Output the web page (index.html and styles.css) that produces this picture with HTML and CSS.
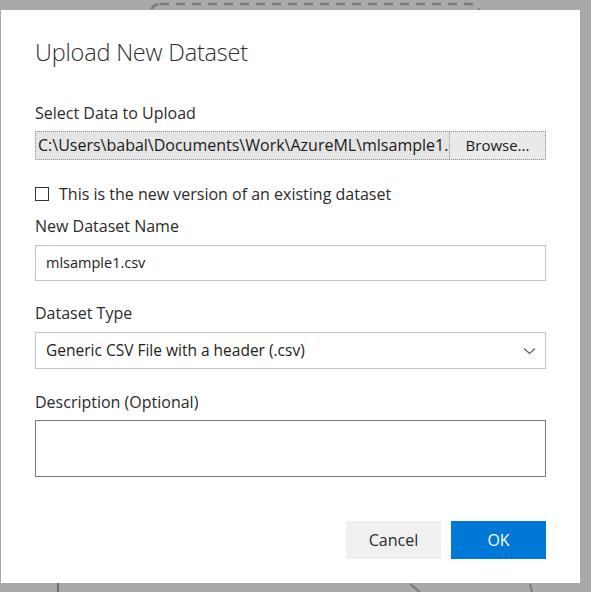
FILE: index.html
```html
<!DOCTYPE html>
<html lang="en">
<head>
<meta charset="utf-8">
<title>Upload New Dataset</title>
<link rel="stylesheet" href="styles.css">
</head>
<body>
<div class="backdrop">
  <svg class="canvas-art" width="591" height="592" viewBox="0 0 591 592" aria-hidden="true">
    <rect x="150" y="4" width="330" height="60" rx="10" ry="10" fill="none" stroke="#7b7b7b" stroke-width="2.5" stroke-dasharray="9 7"/>
    <line x1="58" y1="583" x2="58" y2="592" stroke="#6e6e6e" stroke-width="2"/>
    <line x1="410" y1="584" x2="420" y2="592" stroke="#7a7a7a" stroke-width="2"/>
    <line x1="530" y1="584" x2="532" y2="592" stroke="#7a7a7a" stroke-width="2"/>
  </svg>
  <div class="dialog">
    <h1 class="title">Upload New Dataset</h1>

    <div class="label first">Select Data to Upload</div>
    <div class="file">
      <span class="file-path">C:\Users\babal\Documents\Work\AzureML\mlsample1.csv</span>
      <span class="file-browse">Browse...</span>
    </div>

    <div class="check">
      <span class="check-box"></span>
      <span class="check-text">This is the new version of an existing dataset</span>
    </div>

    <div class="label l-name">New Dataset Name</div>
    <div class="input">mlsample1.csv</div>

    <div class="label l-type">Dataset Type</div>
    <div class="select">
      <span>Generic CSV File with a header (.csv)</span>
      <svg class="chevron" width="13" height="8" viewBox="0 0 13 8" aria-hidden="true">
        <polyline points="1,1.5 6.5,6.5 12,1.5" fill="none" stroke="#5a5a5a" stroke-width="1.1"/>
      </svg>
    </div>

    <div class="label l-desc">Description (Optional)</div>
    <div class="textarea"></div>

    <div class="actions">
      <button class="btn btn-cancel" type="button">Cancel</button>
      <button class="btn btn-ok" type="button">OK</button>
    </div>
  </div>
</div>
</body>
</html>
```

FILE: styles.css
```css
* { box-sizing: border-box; }

html, body {
  margin: 0;
  padding: 0;
  background: #a9a9a9;
}

body {
  font-family: "Open Sans", "Noto Sans", "Liberation Sans", sans-serif;
  color: #2b2b2b;
}

.backdrop {
  position: relative;
  width: 591px;
  height: 592px;
  overflow: hidden;
  padding: 10px 0 0 1px;
}

.canvas-art {
  position: absolute;
  left: 0;
  top: 0;
}

.dialog {
  position: relative;
  width: 579px;
  height: 573px;
  background: #ffffff;
  padding: 27px 0 0 34px;
  display: flex;
  flex-direction: column;
  align-items: flex-start;
}

.title {
  margin: 0;
  font-size: 23.5px;
  font-weight: 300;
  line-height: 30px;
  color: #2e2e2e;
  letter-spacing: -0.2px;
}

.label {
  font-size: 16px;
  line-height: 20px;
  color: #2b2b2b;
}

.label.first { margin-top: 36px; }

.file {
  margin-top: 8px;
  width: 511px;
  height: 29px;
  display: flex;
  background: #e5e5e5;
  border: 1px dotted #8f8f8f;
}

.file-path {
  flex: 1;
  overflow: hidden;
  white-space: nowrap;
  font-size: 16px;
  line-height: 27px;
  padding-left: 2px;
  color: #1a1a1a;
}

.file-browse {
  width: 96px;
  flex: none;
  border-left: 1px dotted #8f8f8f;
  background: #e9e9e9;
  font-size: 15px;
  line-height: 27px;
  text-align: center;
  color: #1a1a1a;
}

.check {
  margin-top: 24px;
  display: flex;
  align-items: center;
  height: 20px;
}

.check-box {
  width: 14px;
  height: 14px;
  border: 1px solid #333;
  margin-right: 10px;
  flex: none;
}

.check-text {
  font-size: 16px;
  line-height: 20px;
}

.label.l-name { margin-top: 12px; }

.input {
  margin-top: 9px;
  width: 511px;
  height: 36px;
  border: 1px solid #c4c4c4;
  padding-left: 10px;
  font-size: 14.5px;
  line-height: 34px;
  color: #222;
}

.label.l-type { margin-top: 22px; }

.select {
  margin-top: 9px;
  width: 511px;
  height: 37px;
  border: 1px solid #c4c4c4;
  padding: 0 9px 0 10px;
  font-size: 15.5px;
  line-height: 35px;
  color: #222;
  display: flex;
  justify-content: space-between;
  align-items: center;
}

.chevron { flex: none; }

.label.l-desc { margin-top: 23px; }

.textarea {
  margin-top: 8px;
  width: 511px;
  height: 57px;
  border: 1px solid #7a7a7a;
}

.actions {
  margin-top: 44px;
  width: 511px;
  display: flex;
  justify-content: flex-end;
  gap: 10px;
}

.btn {
  width: 95px;
  height: 38px;
  border: none;
  font-family: inherit;
  font-size: 16px;
  padding: 0;
  cursor: pointer;
}

.btn-cancel {
  background: #f0f0f0;
  color: #2b2b2b;
}

.btn-ok {
  background: #0078d7;
  color: #ffffff;
}
```
